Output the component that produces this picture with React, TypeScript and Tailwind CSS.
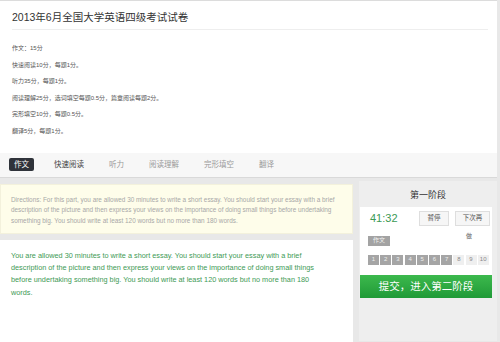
const scores = [
  '作文：15分',
  '快速阅读10分，每题1分。',
  '听力35分，每题1分。',
  '阅读理解25分，选词填空每题0.5分，篇章阅读每题2分。',
  '完形填空10分，每题0.5分。',
  '翻译5分，每题1分。',
];

const tabs = [
  { label: '作文', tone: 'active' },
  { label: '快速阅读', tone: 'dark' },
  { label: '听力', tone: 'light' },
  { label: '阅读理解', tone: 'light' },
  { label: '完形填空', tone: 'light' },
  { label: '翻译', tone: 'light' },
];

const directions =
  'Directions: For this part, you are allowed 30 minutes to write a short essay. You should start your essay with a brief description of the picture and then express your views on the importance of doing small things before undertaking something big. You should write at least 120 words but no more than 180 words.';

const essay =
  'You are allowed 30 minutes to write a short essay. You should start your essay with a brief description of the picture and then express your views on the importance of doing small things before undertaking something big. You should write at least 120 words but no more than 180 words.';

function StagePanel() {
  return (
    <aside className="w-[138px] h-[160px] bg-[#eeeeee]">
      <div className="h-[26px] flex items-center justify-center pt-[5px] text-[9px] text-[#333]">第一阶段</div>
      <div className="ml-[1px] mr-[5px] bg-white">
        <div className="h-[23px] flex items-center pl-[10px] pr-[2px]">
          <span className="text-[11px] leading-none text-[#3c9a55]">41:32</span>
          <div className="ml-auto flex gap-[6px]">
            <button className="h-[15px] w-[30px] border border-[#dedede] bg-[#f6f6f6] text-[6.5px] text-[#555]">暂停</button>
            <button className="h-[15px] w-[35px] border border-[#dedede] bg-[#f6f6f6] text-[6.5px] text-[#555]">下次再</button>
          </div>
        </div>
        <div className="mt-[6px] h-[10px] flex items-start pl-[8px] pr-[20px]">
          <span className="h-[10px] w-[22px] flex items-center justify-center bg-[#a3a3a3] text-[6px] text-[#f2f2f2]">作文</span>
          <span className="ml-auto -mt-[4px] text-[6px] text-[#666]">做</span>
        </div>
        <div className="mt-[9px] pl-[8px] pb-[8px] flex gap-[1.2px]">
          {Array.from({ length: 10 }, (_, i) => (
            <span
              key={i}
              className={`h-[10px] w-[11px] flex items-center justify-center text-[6px] ${
                i < 7 ? 'bg-[#a5a5a5] text-[#eeeeee]' : 'bg-[#efefef] text-[#888]'
              }`}
            >
              {i + 1}
            </span>
          ))}
        </div>
        <button className="w-full h-[23px] bg-gradient-to-b from-[#3cb94d] to-[#1f9a37] text-white text-[10.5px]">
          提交，进入第二阶段
        </button>
      </div>
    </aside>
  );
}

export default function App() {
  return (
    <div className="w-[500px] h-[342px] overflow-hidden bg-[#e8e8e8] font-['Liberation_Sans','Noto_Sans_CJK_SC',sans-serif]">
      <div className="w-[497px]">
        <header className="bg-white border-t border-[#dcdcdc]">
          <div className="px-[12px] pt-[8px]">
            <h1 className="text-[10.5px] leading-[16px] text-[#333]">2013年6月全国大学英语四级考试试卷</h1>
            <div className="mt-[4px] h-[1px] bg-[#eeeeee] -mr-[3px]" />
            <div className="pt-[10px] pb-[13px] text-[6px] leading-[16.6px] text-[#555]">
              {scores.map((s) => (
                <p key={s}>{s}</p>
              ))}
            </div>
          </div>
          <nav className="h-[25px] flex items-center gap-[15px] px-[9px] bg-[#f7f7f7] border-b border-[#d9d9d9]">
            {tabs.map((t) => (
              <span
                key={t.label}
                className={`h-[13px] px-[5px] flex items-center rounded-[2px] text-[7.5px] ${
                  t.tone === 'active'
                    ? 'bg-[#2f333a] text-white'
                    : t.tone === 'dark'
                      ? 'text-[#444]'
                      : 'text-[#9a9a9a]'
                }`}
              >
                {t.label}
              </span>
            ))}
          </nav>
        </header>

        <div className="mt-[3px] flex">
          <main className="w-[353px] pt-[3px] flex flex-col gap-[6px]">
            <div className="h-[50px] bg-[#fefdea] border border-[#f3f1dc] pl-[10px] pr-[6px] pt-[10px] text-[6.4px] leading-[10.7px] text-[#a8a8a8]">
              {directions}
            </div>
            <div className="h-[110px] bg-white pl-[11px] pr-[24px] pt-[10px] text-[7.3px] leading-[12.4px] text-[#3e9a55]">
              {essay}
            </div>
          </main>
          <div className="ml-auto">
            <StagePanel />
          </div>
        </div>
      </div>
    </div>
  );
}
